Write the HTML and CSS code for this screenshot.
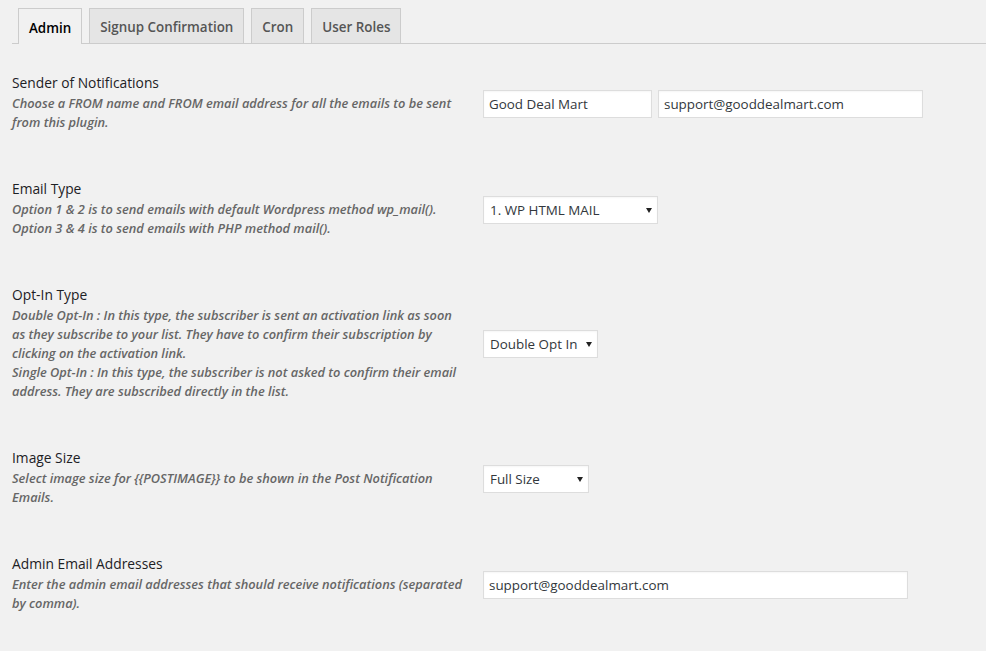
FILE: index.html
```html
<!DOCTYPE html>
<html lang="en">
<head>
<meta charset="utf-8">
<title>Settings</title>
<link rel="stylesheet" href="styles.css">
</head>
<body>
<div class="wrap">
  <nav class="tabs">
    <a class="tab active" href="#">Admin</a>
    <a class="tab" href="#">Signup Confirmation</a>
    <a class="tab" href="#">Cron</a>
    <a class="tab" href="#">User Roles</a>
  </nav>
  <div class="form">
    <div class="row">
      <div class="label">
        <h3>Sender of Notifications</h3>
        <p>Choose a FROM name and FROM email address for all the emails to be sent from this plugin.</p>
      </div>
      <div class="field">
        <input class="input w-name" type="text" value="Good Deal Mart">
        <input class="input w-from" type="text" value="support@gooddealmart.com">
      </div>
    </div>
    <div class="row">
      <div class="label">
        <h3>Email Type</h3>
        <p>Option 1 &amp; 2 is to send emails with default Wordpress method wp_mail().<br>Option 3 &amp; 4 is to send emails with PHP method mail().</p>
      </div>
      <div class="field">
        <span class="select w-type"><select><option>1. WP HTML MAIL</option></select></span>
      </div>
    </div>
    <div class="row">
      <div class="label">
        <h3>Opt-In Type</h3>
        <p>Double Opt-In : In this type, the subscriber is sent an activation link as soon as they subscribe to your list. They have to confirm their subscription by clicking on the activation link.<br>Single Opt-In : In this type, the subscriber is not asked to confirm their email address. They are subscribed directly in the list.</p>
      </div>
      <div class="field">
        <span class="select w-opt"><select><option>Double Opt In</option></select></span>
      </div>
    </div>
    <div class="row">
      <div class="label">
        <h3>Image Size</h3>
        <p>Select image size for {{POSTIMAGE}} to be shown in the Post Notification Emails.</p>
      </div>
      <div class="field">
        <span class="select w-size"><select><option>Full Size</option></select></span>
      </div>
    </div>
    <div class="row">
      <div class="label">
        <h3>Admin Email Addresses</h3>
        <p>Enter the admin email addresses that should receive notifications (separated by comma).</p>
      </div>
      <div class="field">
        <input class="input w-admin" type="text" value="support@gooddealmart.com">
      </div>
    </div>
  </div>
</div>
</body>
</html>
```

FILE: styles.css
```css
html, body {
  margin: 0;
  padding: 0;
  background: #f1f1f1;
}
body {
  font-family: "Open Sans", "Noto Sans", sans-serif;
  color: #23282d;
}
.wrap {
  padding: 8px 0 0 12px;
}
.tabs {
  display: flex;
  gap: 7px;
  padding-left: 6px;
  border-bottom: 1px solid #ccc;
  height: 35px;
}
.tab {
  display: flex;
  align-items: center;
  box-sizing: border-box;
  height: 35px;
  padding: 2px 10px 0;
  border: 1px solid #ccc;
  border-bottom: none;
  background: #e5e5e5;
  color: #555;
  font-size: 13.4px;
  font-weight: 600;
  text-decoration: none;
}
.tab.active {
  background: #f1f1f1;
  color: #000;
  height: 36px;
  margin-bottom: -1px;
}
.form {
  margin-top: 5px;
}
.row {
  display: grid;
  grid-template-columns: 450px auto;
  column-gap: 21px;
  align-items: center;
  padding: 23px 0;
}
.label h3 {
  margin: 0;
  font-size: 13.8px;
  font-weight: 500;
  line-height: 22px;
  color: #1d2125;
}
.label p {
  margin: 0;
  font-size: 12.8px;
  font-style: italic;
  font-weight: 600;
  line-height: 19px;
  color: #666;
}
.field {
  display: flex;
  gap: 6px;
  align-items: center;
  padding-top: 3px;
}
.input, .select select {
  box-sizing: border-box;
  height: 28px;
  border: 1px solid #ddd;
  background: #fff;
  font-family: inherit;
  font-size: 13.4px;
  color: #32373c;
  padding: 0 5px;
  box-shadow: inset 0 1px 2px rgba(0,0,0,0.04);
  outline: none;
}
.select {
  position: relative;
  display: inline-block;
}
.select select {
  appearance: none;
  -webkit-appearance: none;
  width: 100%;
  padding: 0 16px 0 6px;
  border-radius: 0;
}
.select::after {
  content: "";
  position: absolute;
  right: 6px;
  top: 12px;
  border-left: 3.5px solid transparent;
  border-right: 3.5px solid transparent;
  border-top: 5px solid #222;
  pointer-events: none;
}
.w-name { width: 169px; }
.w-from { width: 265px; }
.w-admin { width: 425px; }
.w-type { width: 175px; }
.w-opt { width: 115px; }
.w-size { width: 106px; }
```
